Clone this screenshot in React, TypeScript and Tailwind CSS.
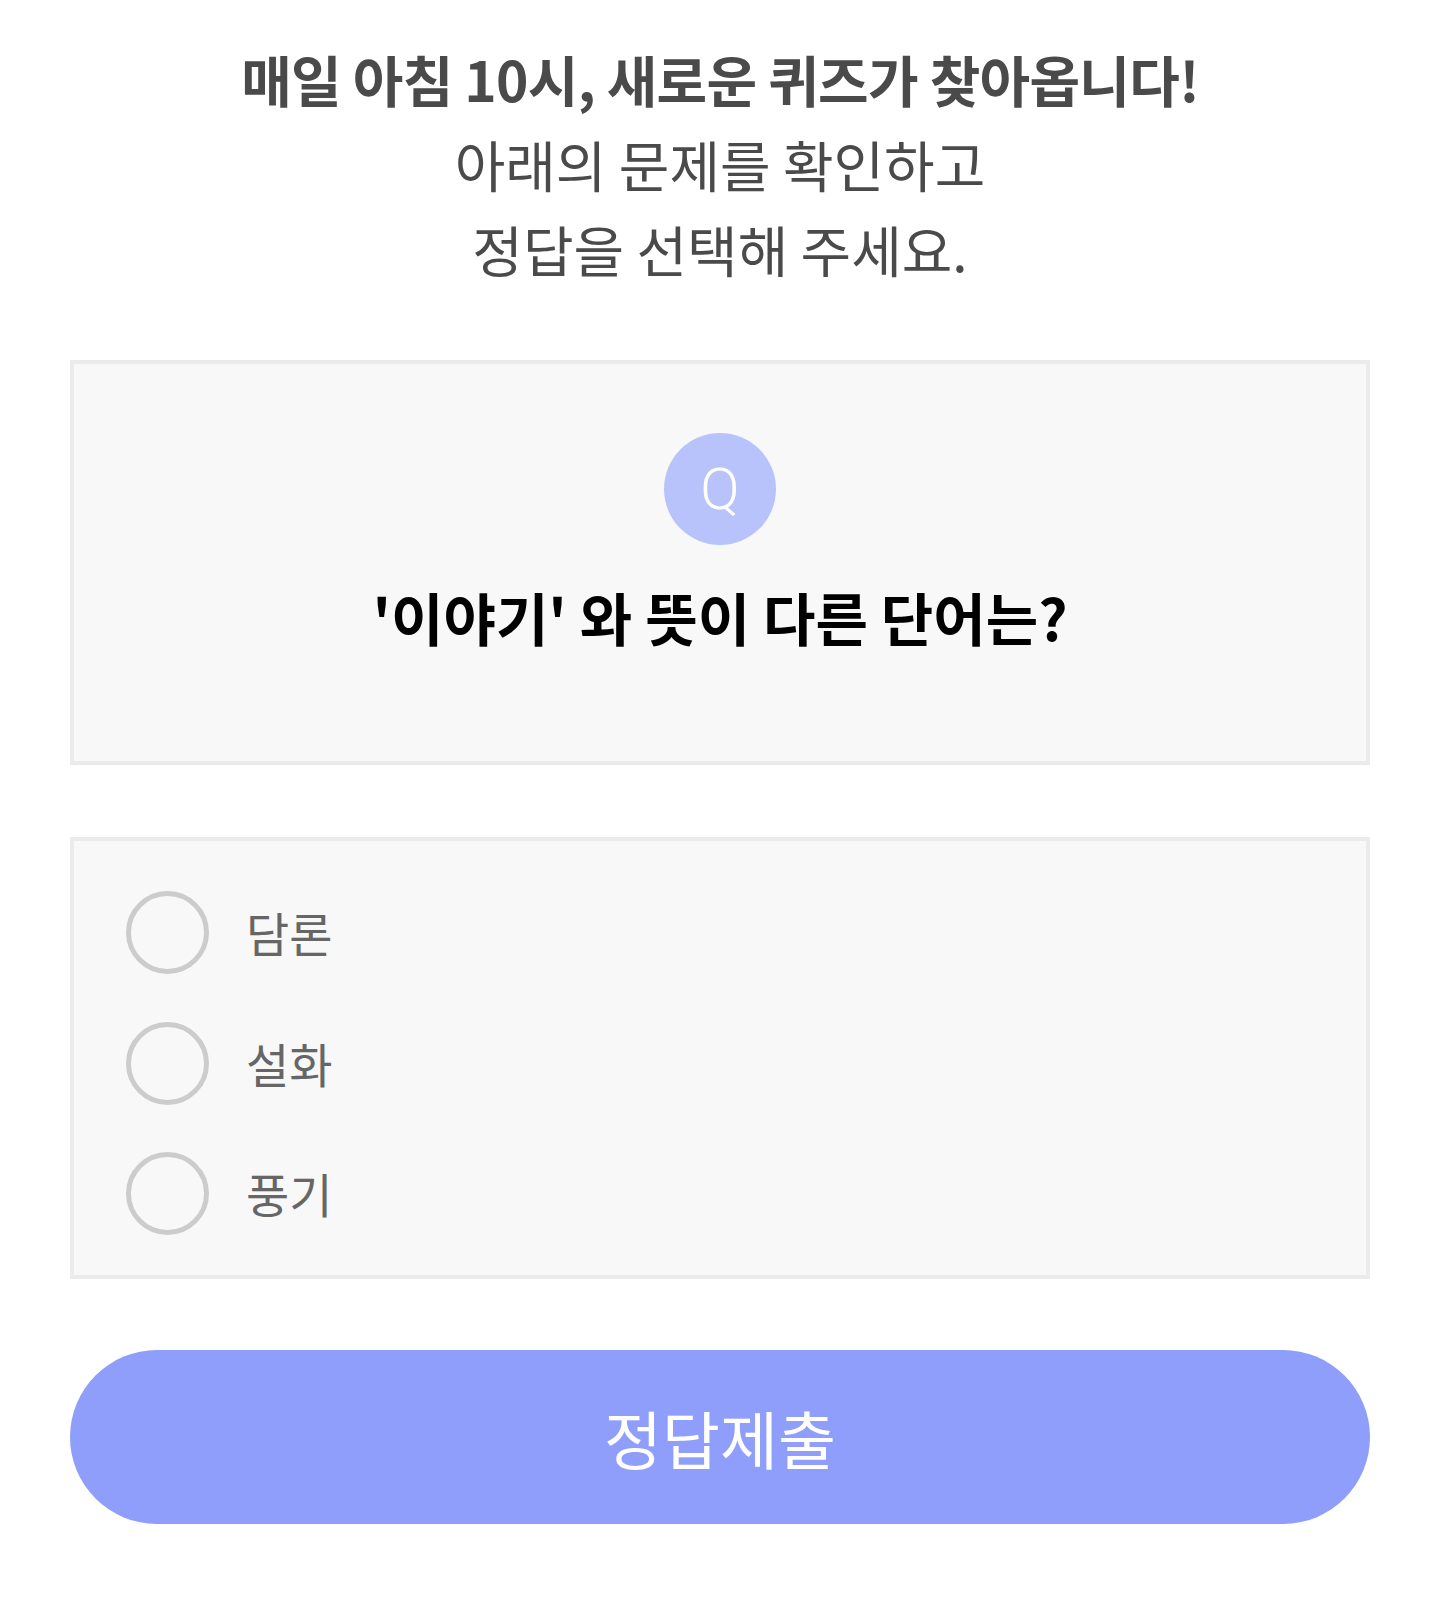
import { useState } from "react";

const options = ["담론", "설화", "풍기"];

export default function App() {
  const [picked, setPicked] = useState<number | null>(null);

  return (
    <div
      className="min-h-[1620px] bg-white px-[70px] pt-[36px]"
      style={{ fontFamily: '"Noto Sans CJK KR", "Noto Sans", sans-serif' }}
    >
      <div className="text-center text-[55px] leading-[85px] text-[#4a4a4a]">
        <p className="font-bold tracking-[-0.7px]">매일 아침 10시, 새로운 퀴즈가 찾아옵니다!</p>
        <p>아래의 문제를 확인하고</p>
        <p>정답을 선택해 주세요.</p>
      </div>

      <div className="mt-[69px] flex h-[405px] flex-col items-center border-4 border-[#ebebeb] bg-[#f8f8f8] pt-[69px]">
        <div className="flex h-[112px] w-[112px] items-center justify-center rounded-full bg-[#b9c3fb] font-['Roboto'] text-[58px] font-light text-white">
          Q
        </div>
        <p className="mt-[36px] text-[57px] font-bold leading-[70px] text-black">
          '이야기' 와 뜻이 다른 단어는?
        </p>
      </div>

      <div className="mt-[72px] flex h-[442px] flex-col border-4 border-[#ebebeb] bg-[#f8f8f8] pb-[16px] pl-[52px] pt-[26px]">
        {options.map((o, i) => (
          <button
            key={o}
            onClick={() => setPicked(i)}
            className="flex h-[131px] items-center gap-[37px] text-left"
          >
            <span
              className={
                picked === i
                  ? "h-[83px] w-[83px] rounded-full border-[5px] border-[#8e9ef9]"
                  : "h-[83px] w-[83px] rounded-full border-[5px] border-[#cccccc]"
              }
            />
            <span className="text-[47px] text-[#666666]">{o}</span>
          </button>
        ))}
      </div>

      <button className="mt-[71px] flex h-[174px] w-full items-center justify-center rounded-full bg-[#8e9efa] text-[63px] text-white">
        정답제출
      </button>
    </div>
  );
}
